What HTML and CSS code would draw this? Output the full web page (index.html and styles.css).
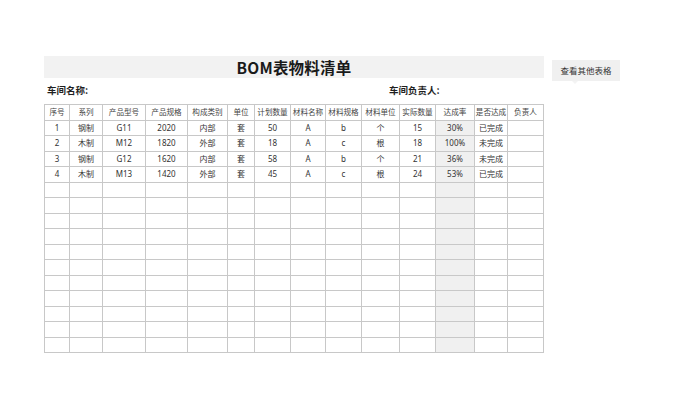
FILE: index.html
```html
<!DOCTYPE html>
<html lang="zh">
<head>
<meta charset="utf-8">
<title>BOM表物料清单</title>
<link rel="stylesheet" href="styles.css">
</head>
<body>
<div class="page">
  <div class="sheet">
    <div class="title-bar">BOM表物料清单</div>
    <div class="info-row">
      <div class="info">车间名称:</div>
      <div class="info">车间负责人:</div>
    </div>
    <table class="bom">
      <colgroup>
        <col style="width:25px"><col style="width:33px"><col style="width:43px"><col style="width:42px">
        <col style="width:40px"><col style="width:27px"><col style="width:36px"><col style="width:35px">
        <col style="width:36px"><col style="width:38px"><col style="width:36px"><col style="width:39px">
        <col style="width:33px"><col style="width:36px">
      </colgroup>
      <thead>
        <tr><th>序号</th><th>系列</th><th>产品型号</th><th>产品规格</th><th>构成类别</th><th>单位</th><th>计划数量</th><th>材料名称</th><th>材料规格</th><th>材料单位</th><th>实际数量</th><th>达成率</th><th>是否达成</th><th>负责人</th></tr>
      </thead>
      <tbody>
        <tr><td>1</td><td>钢制</td><td>G11</td><td>2020</td><td>内部</td><td>套</td><td>50</td><td>A</td><td>b</td><td>个</td><td>15</td><td class="rate">30%</td><td>已完成</td><td></td></tr>
        <tr><td>2</td><td>木制</td><td>M12</td><td>1820</td><td>外部</td><td>套</td><td>18</td><td>A</td><td>c</td><td>根</td><td>18</td><td class="rate">100%</td><td>未完成</td><td></td></tr>
        <tr><td>3</td><td>钢制</td><td>G12</td><td>1620</td><td>内部</td><td>套</td><td>58</td><td>A</td><td>b</td><td>个</td><td>21</td><td class="rate">36%</td><td>未完成</td><td></td></tr>
        <tr><td>4</td><td>木制</td><td>M13</td><td>1420</td><td>外部</td><td>套</td><td>45</td><td>A</td><td>c</td><td>根</td><td>24</td><td class="rate">53%</td><td>已完成</td><td></td></tr>
        <tr><td></td><td></td><td></td><td></td><td></td><td></td><td></td><td></td><td></td><td></td><td></td><td class="rate"></td><td></td><td></td></tr>
        <tr><td></td><td></td><td></td><td></td><td></td><td></td><td></td><td></td><td></td><td></td><td></td><td class="rate"></td><td></td><td></td></tr>
        <tr><td></td><td></td><td></td><td></td><td></td><td></td><td></td><td></td><td></td><td></td><td></td><td class="rate"></td><td></td><td></td></tr>
        <tr><td></td><td></td><td></td><td></td><td></td><td></td><td></td><td></td><td></td><td></td><td></td><td class="rate"></td><td></td><td></td></tr>
        <tr><td></td><td></td><td></td><td></td><td></td><td></td><td></td><td></td><td></td><td></td><td></td><td class="rate"></td><td></td><td></td></tr>
        <tr><td></td><td></td><td></td><td></td><td></td><td></td><td></td><td></td><td></td><td></td><td></td><td class="rate"></td><td></td><td></td></tr>
        <tr><td></td><td></td><td></td><td></td><td></td><td></td><td></td><td></td><td></td><td></td><td></td><td class="rate"></td><td></td><td></td></tr>
        <tr><td></td><td></td><td></td><td></td><td></td><td></td><td></td><td></td><td></td><td></td><td></td><td class="rate"></td><td></td><td></td></tr>
        <tr><td></td><td></td><td></td><td></td><td></td><td></td><td></td><td></td><td></td><td></td><td></td><td class="rate"></td><td></td><td></td></tr>
        <tr><td></td><td></td><td></td><td></td><td></td><td></td><td></td><td></td><td></td><td></td><td></td><td class="rate"></td><td></td><td></td></tr>
        <tr><td></td><td></td><td></td><td></td><td></td><td></td><td></td><td></td><td></td><td></td><td></td><td class="rate"></td><td></td><td></td></tr>
      </tbody>
    </table>
  </div>
  <div class="side">
    <button class="other-btn" type="button">查看其他表格</button>
  </div>
</div>
</body>
</html>
```

FILE: styles.css
```css
html, body {
  margin: 0;
  padding: 0;
  background: #ffffff;
}

body {
  font-family: "Noto Sans", "Noto Sans CJK SC", sans-serif;
  color: #333333;
}

.page {
  display: flex;
  align-items: flex-start;
  gap: 8px;
  padding: 56px 0 0 44px;
}

.sheet {
  width: 500px;
  display: flex;
  flex-direction: column;
}

.title-bar {
  height: 22px;
  background: #f2f2f2;
  display: flex;
  align-items: center;
  justify-content: center;
  font-family: "Noto Sans CJK SC", sans-serif;
  font-weight: 700;
  font-size: 15.5px;
  color: #1a1a1a;
  letter-spacing: 0.2px;
}

.info-row {
  height: 26px;
  display: grid;
  grid-template-columns: 342px 1fr;
  align-items: center;
  padding-left: 3px;
}

.info {
  font-family: "Noto Sans CJK SC", sans-serif;
  font-weight: 700;
  font-size: 9.5px;
  color: #1f1f1f;
  line-height: 1;
}

.bom {
  table-layout: fixed;
  width: 500px;
  border-collapse: collapse;
  font-family: "Noto Sans", "Noto Sans CJK SC", sans-serif;
  font-size: 8px;
  color: #333333;
}

.bom th,
.bom td {
  height: 14.5px;
  padding: 0;
  border: 1px solid #c8c8c8;
  text-align: center;
  vertical-align: middle;
  font-weight: 400;
  white-space: nowrap;
  overflow: hidden;
  line-height: 1;
}

.bom th {
  font-family: "Noto Sans CJK SC", sans-serif;
  font-size: 7.6px;
  color: #444444;
}

.bom td.rate {
  background: #f0f0f0;
}

.side {
  position: relative;
  padding-top: 1px;
}

.other-btn {
  position: relative;
  width: 68px;
  height: 21px;
  padding: 0;
  border: none;
  background: #f0f0f0;
  font-family: "Noto Sans CJK SC", sans-serif;
  font-size: 8.5px;
  color: #333333;
  cursor: pointer;
}

.other-btn::after {
  content: "";
  position: absolute;
  left: 20px;
  top: 21px;
  border-left: 3px solid transparent;
  border-right: 3px solid transparent;
  border-top: 3px solid #f3f3f3;
}
```
